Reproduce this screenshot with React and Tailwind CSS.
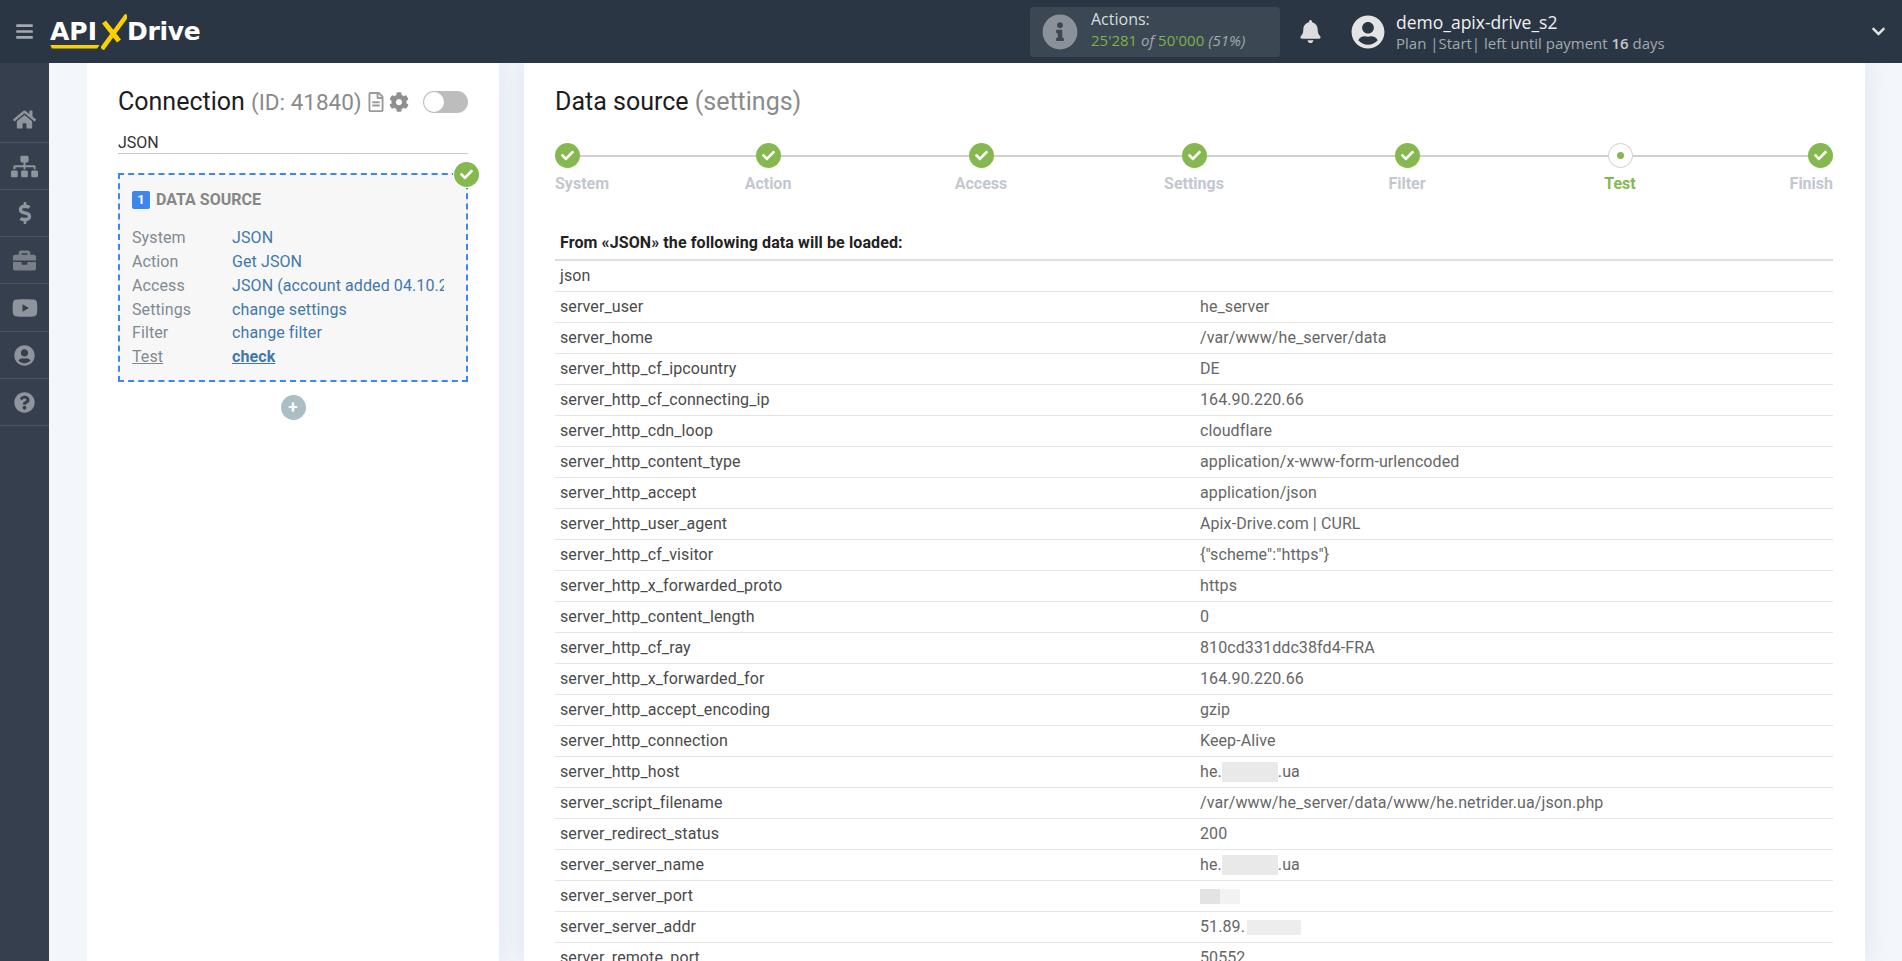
import {
  FaBars,
  FaBell,
  FaBriefcase,
  FaCheck,
  FaChevronDown,
  FaCog,
  FaDollarSign,
  FaHome,
  FaInfoCircle,
  FaQuestionCircle,
  FaRegFileAlt,
  FaSitemap,
  FaUserCircle,
  FaYoutube,
} from "react-icons/fa";

const navIcons = [
  { icon: FaHome, size: 23, h: "h-[47px]", color: "text-[#8f959d]" },
  { icon: FaSitemap, size: 27, h: "h-[47px]", color: "text-[#8f959d]" },
  { icon: FaDollarSign, size: 22, h: "h-[47px]", color: "text-[#8f959d]" },
  { icon: FaBriefcase, size: 23, h: "h-[47px]", color: "text-[#7a8089]" },
  { icon: FaYoutube, size: 26, h: "h-[48px]", color: "text-[#8f959d]" },
  { icon: FaUserCircle, size: 21, h: "h-[47px]", color: "text-[#8f959d]" },
  { icon: FaQuestionCircle, size: 21, h: "h-[47px]", color: "text-[#8f959d]" },
];

const sourceRows = [
  ["System", "JSON"],
  ["Action", "Get JSON"],
  ["Access", "JSON (account added 04.10.2022)"],
  ["Settings", "change settings"],
];

const steps = [
  { label: "System", align: "start" },
  { label: "Action" },
  { label: "Access" },
  { label: "Settings" },
  { label: "Filter" },
  { label: "Test", current: true },
  { label: "Finish", align: "end" },
];

const dataRows = [
  ["json", ""],
  ["server_user", "he_server"],
  ["server_home", "/var/www/he_server/data"],
  ["server_http_cf_ipcountry", "DE"],
  ["server_http_cf_connecting_ip", "164.90.220.66"],
  ["server_http_cdn_loop", "cloudflare"],
  ["server_http_content_type", "application/x-www-form-urlencoded"],
  ["server_http_accept", "application/json"],
  ["server_http_user_agent", "Apix-Drive.com | CURL"],
  ["server_http_cf_visitor", '{"scheme":"https"}'],
  ["server_http_x_forwarded_proto", "https"],
  ["server_http_content_length", "0"],
  ["server_http_cf_ray", "810cd331ddc38fd4-FRA"],
  ["server_http_x_forwarded_for", "164.90.220.66"],
  ["server_http_accept_encoding", "gzip"],
  ["server_http_connection", "Keep-Alive"],
  ["server_http_host", <Host key="host" />],
  ["server_script_filename", "/var/www/he_server/data/www/he.netrider.ua/json.php"],
  ["server_redirect_status", "200"],
  ["server_server_name", <Host key="name" />],
  ["server_server_port", <Port key="port" />],
  ["server_server_addr", <Addr key="addr" />],
  ["server_remote_port", "50552"],
];

// blurred bits of the data values
function Host() {
  return (
    <span className="flex items-center">
      he.
      <span className="h-5 w-[56px] bg-[#e9e9e9]" />
      .ua
    </span>
  );
}

function Port() {
  return (
    <span className="flex h-full items-center">
      <span className="h-[15px] w-5 bg-[#e3e3e3]" />
      <span className="h-[15px] w-5 bg-[#f1f2f2]" />
    </span>
  );
}

function Addr() {
  return (
    <span className="flex items-center">
      51.89.
      <span className="ml-[2px] h-[15px] w-[54px] bg-[#ededed]" />
    </span>
  );
}

function Logo() {
  return (
    <div className="relative ml-[1px] flex h-[36px] items-center font-['DejaVu_Sans',sans-serif] text-[25px] font-bold text-white">
      <span className="w-[51px]">API</span>
      <svg width="26" height="36" viewBox="0 0 26 36" className="shrink-0">
        <path d="M1 35 L26 1" stroke="#fbd000" strokeWidth="4.5" fill="none" />
        <path d="M3 8 L18 27" stroke="#fbd000" strokeWidth="5" fill="none" />
      </svg>
      <span className="tracking-[-0.3px]">Drive</span>
      <span className="absolute bottom-[1px] left-0 h-1 w-[50px] bg-[#fbd000] [clip-path:polygon(0_0,100%_0,94%_100%,4%_100%)]" />
    </div>
  );
}

function Header() {
  return (
    <header className="flex h-[63px] shrink-0 items-center bg-[#2b3644] font-['Open_Sans',sans-serif]">
      <div className="flex w-[49px] justify-center">
        <FaBars className="text-[19px] text-[#a3a9af]" />
      </div>
      <Logo />
      <div className="ml-auto flex h-[50px] w-[250px] items-center rounded-[4px] bg-[#3b4853]">
        <FaInfoCircle className="ml-[12px] text-[36px] text-[#8a9198]" />
        <div className="-mt-[3px] ml-[13px] leading-[21px]">
          <div className="text-[16px] text-[#d9dcdf]">Actions:</div>
          <div className="text-[15px] text-[#7cb14c]">
            25'281 <i className="text-[#a2a9ae]">of</i> 50'000 <i className="text-[#a2a9ae]">(51%)</i>
          </div>
        </div>
      </div>
      <FaBell className="ml-[19px] text-[23px] text-[#dddddd]" />
      <FaUserCircle className="ml-[29px] rounded-full text-[34px] text-[#e4e4e4]" />
      <div className="ml-[11px] w-[475px]">
        <div className="text-[17.5px] leading-[22px] text-[#f0f0f0]">demo_apix-drive_s2</div>
        <div className="text-[15px] leading-[20px] text-[#a2a9ae]">
          Plan |Start| left until payment <b className="font-semibold text-[#c4c8cb]">16</b> days
        </div>
      </div>
      <FaChevronDown className="mr-[16px] text-[15px] text-[#e4e4e4]" />
    </header>
  );
}

function Sidebar() {
  return (
    <nav className="flex w-[49px] shrink-0 flex-col bg-[#353f4d] pt-[33px]">
      {navIcons.map(({ icon: Icon, size, h, color }, i) => (
        <div key={i} className={`flex ${h} items-center justify-center border-b border-[#4a5462]`}>
          <Icon style={{ fontSize: size }} className={color} />
        </div>
      ))}
    </nav>
  );
}

function ConnectionCard() {
  return (
    <section className="h-full w-[412px] shrink-0 bg-white px-[31px] pt-5 shadow-[0_0_24px_rgba(120,135,165,0.16)]">
      <div className="flex h-[38px] items-center">
        <h2 className="flex items-baseline whitespace-pre text-[25px] text-[#1d1d1d]">
          Connection <span className="text-[22.5px] text-[#8a8a8a]">(ID: 41840)</span>
        </h2>
        <FaRegFileAlt className="ml-[4px] text-[20px] text-[#9a9a9a]" />
        <FaCog className="ml-[3px] text-[20px] text-[#8f8f8f]" />
        <div className="ml-auto flex h-[22px] w-[45px] items-center rounded-full bg-[#bdbdbd]">
          <span className="ml-[1px] size-5 rounded-full bg-white" />
        </div>
      </div>
      <div className="mt-[7px] flex h-[26px] items-center border-b border-[#c8c8c8] pt-1 text-[16px] text-[#333]">JSON</div>

      <div className="relative mt-[19px] h-[209px] border-2 border-dashed border-[#3b86f0] bg-[#f7f7f7] px-3 pt-[15px]">
        <span className="absolute -right-[13px] -top-[13px] flex size-[25px] items-center justify-center rounded-full bg-[#85b84f] ring-1 ring-white">
          <FaCheck className="text-[13px] text-white" />
        </span>
        <div className="flex h-[20px] items-center">
          <span className="flex size-[18px] items-center justify-center rounded-[2px] bg-[#3b86f0] text-[13px] font-bold text-white">1</span>
          <span className="ml-[6px] text-[16px] font-bold text-[#868686]">DATA SOURCE</span>
        </div>
        <div className="mt-[16px] text-[16px] leading-[24px] tracking-[0.1px]">
          {sourceRows.map(([k, v]) => (
            <div key={k} className="flex">
              <span className="w-[100px] shrink-0 text-[#7f8a93]">{k}</span>
              <span className="w-[212px] overflow-hidden whitespace-nowrap text-[#3f78ad]">{v}</span>
            </div>
          ))}
          <div className="-mt-px flex">
            <span className="w-[100px] shrink-0 text-[#7f8a93]">Filter</span>
            <span className="text-[#3f78ad]">change filter</span>
          </div>
          <div className="flex">
            <span className="w-[100px] shrink-0 text-[#7f8a93] underline">Test</span>
            <span className="font-bold text-[#3f78ad] underline">check</span>
          </div>
        </div>
      </div>

      <div className="mt-[13px] flex justify-center">
        <span className="flex size-[25px] items-center justify-center rounded-full bg-[#a9bfc3] text-[17px] font-bold leading-none text-white">+</span>
      </div>
    </section>
  );
}

function Stepper() {
  return (
    <div className="relative mt-[22px] flex">
      {/* line runs behind the circles */}
      <span className="absolute left-3 right-3 top-3 h-[2px] bg-[#d0d0d0]" />
      {steps.map((s) => {
        const wrap =
          s.align === "start" ? "flex-1 items-start" : s.align === "end" ? "flex-1 items-end" : "w-[213px] items-center";
        return (
          <div key={s.label} className={`relative flex flex-col ${wrap}`}>
            {s.current ? (
              <span className="flex size-[25px] items-center justify-center rounded-full border border-[#cfcfcf] bg-white">
                <span className="size-[7px] rounded-full bg-[#85b84f]" />
              </span>
            ) : (
              <span className="flex size-[25px] items-center justify-center rounded-full bg-[#85b84f]">
                <FaCheck className="text-[13px] text-white" />
              </span>
            )}
            <span className={`mt-[7px] text-[16px] font-bold leading-[18px] ${s.current ? "text-[#85b84f]" : "text-[#c2c7d0]"}`}>
              {s.label}
            </span>
          </div>
        );
      })}
    </div>
  );
}

function DataCard() {
  return (
    <section className="h-full w-[1341px] shrink-0 overflow-hidden bg-white pl-[31px] pr-[32px] pt-5 shadow-[0_0_24px_rgba(120,135,165,0.16)]">
      <h2 className="flex h-[38px] items-center whitespace-pre text-[25px] text-[#1d1d1d]">
        Data source <span className="text-[#8a8a8a]">(settings)</span>
      </h2>
      <Stepper />
      <div className="mt-[33px] flex h-[35px] items-center border-b-2 border-[#dedede] px-[5px] text-[16px] font-bold tracking-[0.1px] text-[#222]">
        From «JSON» the following data will be loaded:
      </div>
      {dataRows.map(([k, v]) => (
        <div key={k} className="grid h-[31px] grid-cols-[645px_1fr] items-center border-b border-[#e4e4e4] text-[16px] tracking-[0.1px]">
          <span className="pl-[5px] text-[#4a4a4a]">{k}</span>
          <span className="text-[#666]">{v}</span>
        </div>
      ))}
    </section>
  );
}

export default function App() {
  return (
    <div className="flex h-screen flex-col overflow-hidden bg-[#f3f6fb] font-['Roboto',sans-serif]">
      <Header />
      <div className="flex min-h-0 flex-1">
        <Sidebar />
        <main className="ml-[38px] flex min-w-0 flex-1 gap-[25px] overflow-hidden">
          <ConnectionCard />
          <DataCard />
        </main>
      </div>
    </div>
  );
}
